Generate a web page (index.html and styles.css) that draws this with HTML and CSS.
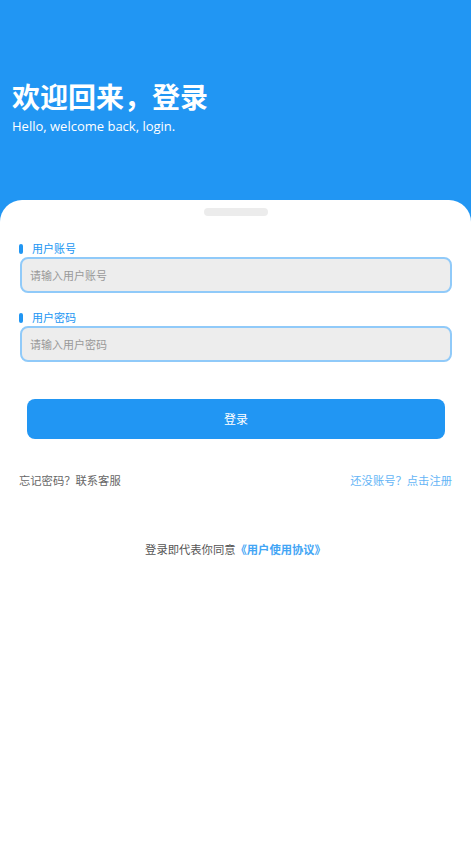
FILE: index.html
```html
<!DOCTYPE html>
<html lang="zh">
<head>
    <meta charset="UTF-8">
    <meta name="viewport" content="width=device-width, initial-scale=1.0">
    <title>登录</title>
    <link rel="stylesheet" href="styles.css">
</head>
<body>

    <div class="header">
        <h1>欢迎回来，登录</h1>
        <div class="subtitle">Hello, welcome back, login.</div>
    </div>

    <div class="card">
        <div class="handle"></div>

        <form class="login-form">
            <label class="field-label" for="account">用户账号</label>
            <input type="text" id="account" placeholder="请输入用户账号">

            <label class="field-label" for="password">用户密码</label>
            <input type="password" id="password" placeholder="请输入用户密码">

            <button type="submit">登录</button>
        </form>

        <div class="links">
            <span class="muted">忘记密码？联系客服</span>
            <span class="register">还没账号？点击注册</span>
        </div>

        <div class="agreement">登录即代表你同意<strong>《用户使用协议》</strong></div>
    </div>

</body>
</html>
```

FILE: styles.css
```css
body {
    margin: 0;
    font-family: "Open Sans", "Noto Sans CJK SC", sans-serif;
    background-color: #2196f3;
}
.header {
    height: 200px;
    padding: 78px 12px 0;
    box-sizing: border-box;
    color: white;
}
h1 {
    margin: 0;
    font-size: 28px;
    font-weight: bold;
    line-height: 38px;
}
.subtitle {
    font-size: 13px;
    line-height: 20px;
}
.card {
    background-color: white;
    border-radius: 22px 22px 0 0;
    min-height: 647px;
    padding: 8px 19px 0;
    box-sizing: border-box;
}
.handle {
    width: 64px;
    height: 8px;
    margin: 0 auto;
    border-radius: 4px;
    background-color: #ececec;
}
.login-form {
    display: flex;
    flex-direction: column;
    padding-top: 25px;
}
.field-label {
    display: flex;
    align-items: center;
    gap: 9px;
    font-size: 11px;
    line-height: 15px;
    color: #2196f3;
    margin-bottom: 1px;
}
.field-label::before {
    content: "";
    width: 4px;
    height: 10px;
    border-radius: 2px;
    background-color: #2196f3;
}
input {
    height: 36px;
    margin: 0 0 17px 1px;
    padding: 0 8px;
    border: 2px solid #90caf9;
    border-radius: 8px;
    background-color: #ededed;
    font-family: inherit;
    font-size: 11px;
    box-sizing: border-box;
}
input::placeholder {
    color: #999;
}
button {
    height: 40px;
    margin: 20px 7px 0 8px;
    border: none;
    border-radius: 8px;
    background-color: #2196f3;
    color: white;
    font-family: inherit;
    font-size: 12px;
}
.links {
    display: flex;
    justify-content: space-between;
    margin-top: 34px;
    font-size: 11.3px;
    line-height: 15px;
}
.muted {
    color: #666;
}
.register {
    color: #64b5f6;
}
.agreement {
    margin-top: 53px;
    text-align: center;
    font-size: 11.3px;
    color: #555;
}
.agreement strong {
    color: #42a5f5;
}
```
